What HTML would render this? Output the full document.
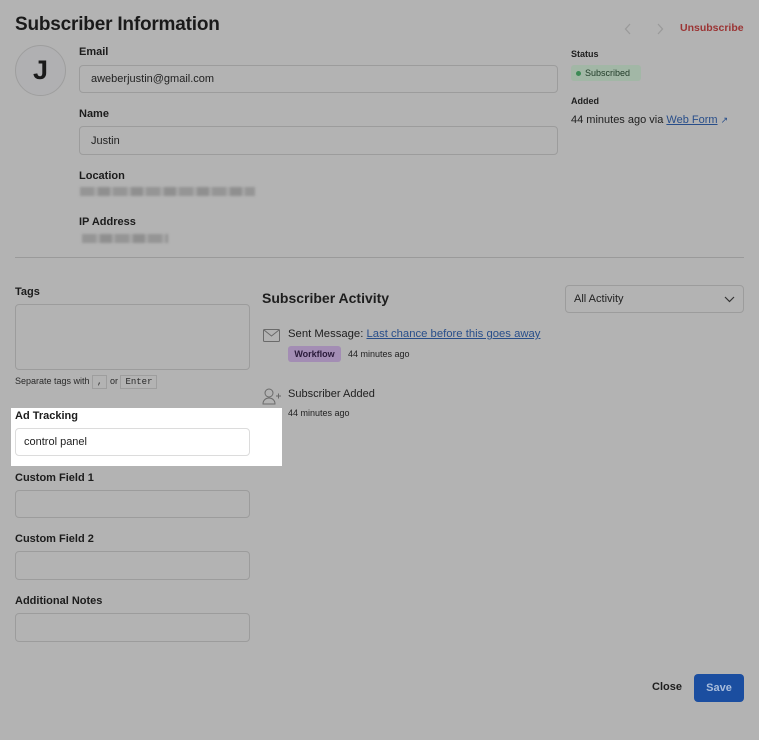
<!DOCTYPE html>
<html><head><style>
*{box-sizing:border-box;margin:0;padding:0}
body{width:759px;height:740px;background:#b3b3b3;font-family:"Liberation Sans",sans-serif;color:#1e1e1e;position:relative;overflow:hidden}
.a{position:absolute}
.lbl{font-size:11px;font-weight:bold;color:#1c1c1c}
.inp{position:absolute;border:1px solid #9c9c9c;border-radius:4px;background:#b3b3b3;font-size:11px;padding-left:11px;display:flex;align-items:center;color:#222}
.blur{position:absolute;height:9px;background:repeating-linear-gradient(90deg,#959595 0 14px,#a6a6a6 14px 18px,#8f8f8f 18px 30px,#a8a8a8 30px 33px);filter:blur(1.2px)}
</style></head><body>
<div class="a" style="left:15px;top:14px;font-size:19px;font-weight:bold;color:#1a1a1a;letter-spacing:-0.2px">Subscriber Information</div>
<div class="a" style="left:15px;top:45px;width:51px;height:51px;border-radius:50%;border:1px solid #9e9e9e;background:#b0b0b2;font-size:27px;font-weight:bold;display:flex;align-items:center;justify-content:center;color:#1a1a1a">J</div>
<div class="a lbl" style="left:79px;top:46px">Email</div>
<div class="inp" style="left:79px;top:65px;width:479px;height:28px">aweberjustin@gmail.com</div>
<div class="a lbl" style="left:79px;top:108px">Name</div>
<div class="inp" style="left:79px;top:126px;width:479px;height:29px">Justin</div>
<div class="a lbl" style="left:79px;top:170px">Location</div>
<div class="blur" style="left:80px;top:187px;width:175px"></div>
<div class="a lbl" style="left:79px;top:216px">IP Address</div>
<div class="blur" style="left:82px;top:234px;width:86px"></div>
<svg class="a" style="left:624px;top:23px" width="8" height="12" viewBox="0 0 8 12"><path d="M6 1L1.5 6 6 11" fill="none" stroke="#9a9a9a" stroke-width="1.3"/></svg>
<svg class="a" style="left:656px;top:23px" width="8" height="12" viewBox="0 0 8 12"><path d="M2 1l4.5 5L2 11" fill="none" stroke="#9a9a9a" stroke-width="1.3"/></svg>
<div class="a" style="left:680px;top:22px;font-size:10.5px;font-weight:bold;color:#9b3434">Unsubscribe</div>
<div class="a" style="left:571px;top:49px;font-size:9px;font-weight:bold">Status</div>
<div class="a" style="left:571px;top:65px;height:16px;width:70px;background:#a2b7a6;border-radius:3px;font-size:9px;display:flex;align-items:center;padding-left:5px;color:#1f3a27"><span style="width:5px;height:5px;border-radius:50%;background:#3c8a55;margin-right:4px"></span>Subscribed</div>
<div class="a" style="left:571px;top:96px;font-size:9px;font-weight:bold">Added</div>
<div class="a" style="left:571px;top:114px;font-size:11px">44 minutes ago via <span style="color:#284e8a;text-decoration:underline">Web Form</span> <span style="color:#284e8a;font-size:9px">↗</span></div>
<div class="a" style="left:15px;top:257px;width:729px;height:1px;background:#9a9a9a"></div>
<div class="a lbl" style="left:15px;top:286px">Tags</div>
<div class="inp" style="left:15px;top:304px;width:235px;height:66px"></div>
<div class="a" style="left:15px;top:376px;font-size:9px;color:#2a2a2a">Separate tags with <span style="font-family:'Liberation Mono';border:1px solid #9e9e9e;padding:1px 4px">,</span> or <span style="font-family:'Liberation Mono';border:1px solid #9e9e9e;padding:1px 4px">Enter</span></div>
<div class="a" style="left:11px;top:408px;width:271px;height:58px;background:#fff"></div>
<div class="a lbl" style="left:15px;top:410px">Ad Tracking</div>
<div class="inp" style="left:15px;top:428px;width:235px;height:28px;background:#fff;border-color:#dcdcdc;padding-left:8px">control panel</div>
<div class="a lbl" style="left:15px;top:472px">Custom Field 1</div>
<div class="inp" style="left:15px;top:490px;width:235px;height:28px"></div>
<div class="a lbl" style="left:15px;top:533px">Custom Field 2</div>
<div class="inp" style="left:15px;top:551px;width:235px;height:29px"></div>
<div class="a lbl" style="left:15px;top:595px">Additional Notes</div>
<div class="inp" style="left:15px;top:613px;width:235px;height:29px"></div>
<div class="a" style="left:262px;top:290px;font-size:14px;font-weight:bold">Subscriber Activity</div>
<div class="inp" style="left:565px;top:285px;width:179px;height:28px;padding-left:8px">All Activity<svg style="position:absolute;right:8px;top:10px" width="11" height="7" viewBox="0 0 11 7"><path d="M1 1l4.5 4.5L10 1" fill="none" stroke="#333" stroke-width="1.2"/></svg></div>
<svg class="a" style="left:263px;top:329px" width="17" height="13" viewBox="0 0 17 13"><rect x="0.5" y="0.5" width="16" height="12" rx="1" fill="none" stroke="#6a6a6a"/><path d="M1 1l7.5 6L16 1" fill="none" stroke="#6a6a6a"/></svg>
<div class="a" style="left:288px;top:328px;font-size:11.3px">Sent Message: <span style="color:#284e8a;text-decoration:underline">Last chance before this goes away</span></div>
<div class="a" style="left:288px;top:346px;height:16px;width:53px;background:#a38db4;border-radius:3px;font-size:9px;font-weight:bold;display:flex;align-items:center;justify-content:center;color:#2a1a3a">Workflow</div>
<div class="a" style="left:348px;top:349px;font-size:9px">44 minutes ago</div>
<svg class="a" style="left:262px;top:388px" width="20" height="17" viewBox="0 0 20 17"><circle cx="7" cy="5" r="4" fill="none" stroke="#6a6a6a"/><path d="M1 16c0-4 3-6 6-6s6 2 6 6z" fill="none" stroke="#6a6a6a"/><path d="M14 8h5M16.5 5.5v5" stroke="#6a6a6a"/></svg>
<div class="a" style="left:288px;top:388px;font-size:11px">Subscriber Added</div>
<div class="a" style="left:288px;top:408px;font-size:9px">44 minutes ago</div>
<div class="a" style="left:652px;top:681px;font-size:11px;font-weight:bold">Close</div>
<div class="a" style="left:694px;top:674px;width:50px;height:28px;background:#1b4ea0;border-radius:4px;color:#a9bddc;font-size:11px;font-weight:bold;display:flex;align-items:center;justify-content:center">Save</div>
</body></html>
